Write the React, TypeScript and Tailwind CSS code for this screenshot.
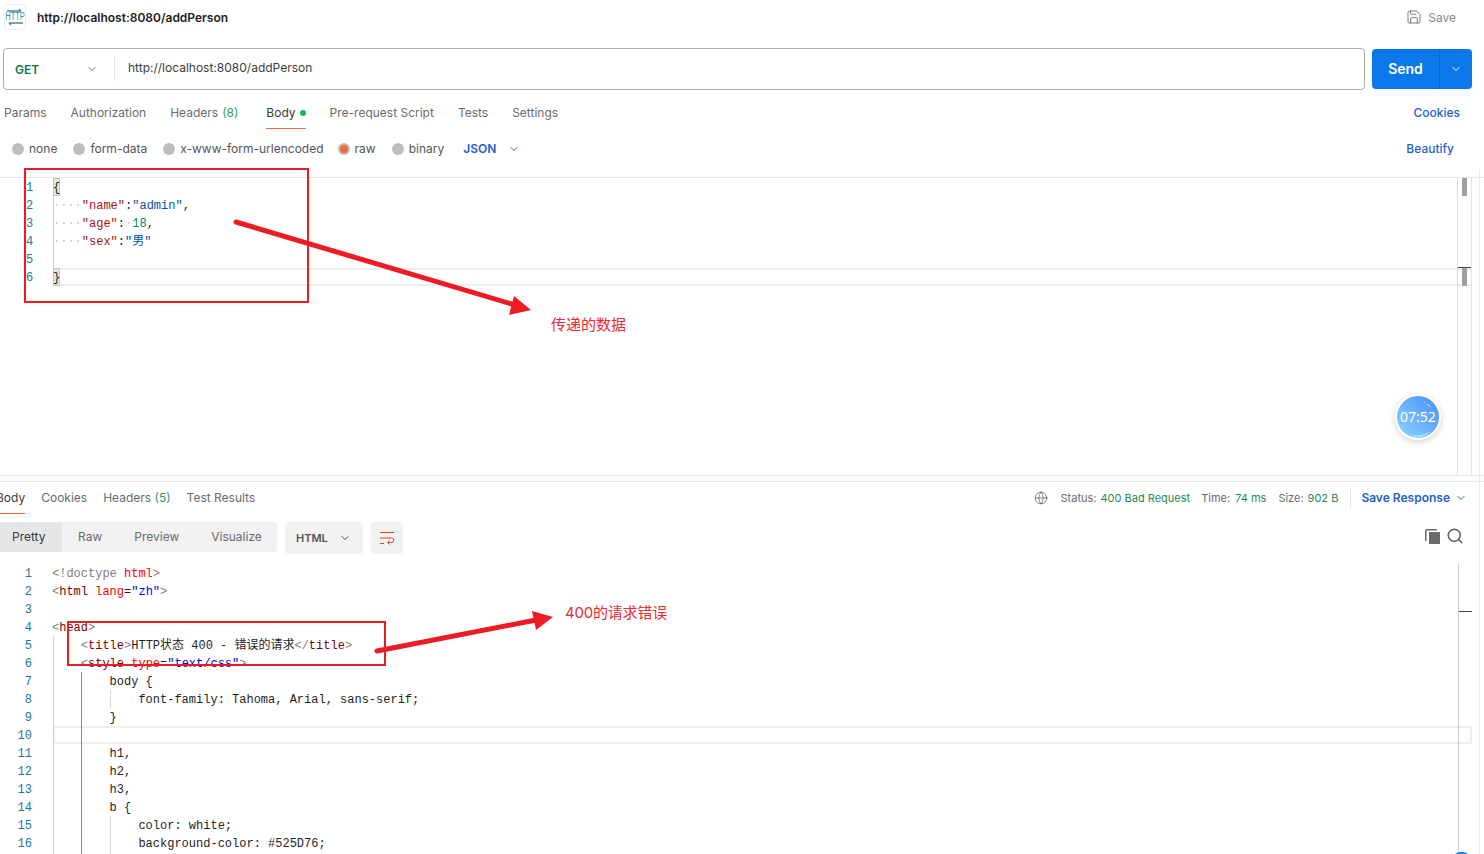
import React from 'react';
import { ChevronDown, Globe, Save, Search } from 'lucide-react';

type Token = [string, string];

const TAG = 'text-[#800000]';
const ATTR = 'text-[#ff0000]';
const VAL = 'text-[#0000ff]';
const PUNCT = 'text-[#808080]';
const INK = 'text-[#1f1f1f]';
const KEY = 'text-[#a31515]';
const STR = 'text-[#0451a5]';
const NUM = 'text-[#098658]';
const DOT = 'text-[#c8c8c8]';

const requestLines: Token[][] = [
  [['{', INK]],
  [['····', DOT], ['"name"', KEY], [':', INK], ['"admin"', STR], [',', INK]],
  [['····', DOT], ['"age"', KEY], [':', INK], ['·', DOT], ['18', NUM], [',', INK]],
  [['····', DOT], ['"sex"', KEY], [':', INK], ['"男"', STR]],
  [],
  [['}', INK]],
];

const responseLines: Token[][] = [
  [['<!doctype', PUNCT], [' ', INK], ['html', ATTR], ['>', PUNCT]],
  [['<', PUNCT], ['html', TAG], [' ', INK], ['lang', ATTR], ['=', INK], ['"zh"', VAL], ['>', PUNCT]],
  [],
  [['<', PUNCT], ['head', TAG], ['>', PUNCT]],
  [['    ', INK], ['<', PUNCT], ['title', TAG], ['>', PUNCT], ['HTTP状态 400 - 错误的请求', INK], ['</', PUNCT], ['title', TAG], ['>', PUNCT]],
  [['    ', INK], ['<', PUNCT], ['style', TAG], [' ', INK], ['type', ATTR], ['=', INK], ['"text/css"', VAL], ['>', PUNCT]],
  [['        body {', INK]],
  [['            font-family: Tahoma, Arial, sans-serif;', INK]],
  [['        }', INK]],
  [],
  [['        h1,', INK]],
  [['        h2,', INK]],
  [['        h3,', INK]],
  [['        b {', INK]],
  [['            color: white;', INK]],
  [['            background-color: #525D76;', INK]],
];

const requestTabs = ['Params', 'Authorization', 'Headers', 'Body', 'Pre-request Script', 'Tests', 'Settings'];

const bodyTypes = [
  { label: 'none', on: false, cls: 'ml-[12px]' },
  { label: 'form-data', on: false, cls: 'ml-[16px]' },
  { label: 'x-www-form-urlencoded', on: false, cls: 'ml-[16px]' },
  { label: 'raw', on: true, cls: 'ml-[14px]' },
  { label: 'binary', on: false, cls: 'ml-[16px]' },
];

const CodeLine = ({ tokens }: { tokens: Token[] }) => (
  <span className="whitespace-pre">
    {tokens.map(([text, color], i) => (
      <span key={i} className={color}>{text}</span>
    ))}
  </span>
);

const App: React.FC = () => {
  return (
    <div className="relative w-[1484px] h-[854px] overflow-hidden bg-white text-xs text-[#6b6b6b] font-['Inter','Noto_Sans_CJK_SC',sans-serif]">
      {/* title bar */}
      <div className="flex items-center justify-between h-[34px] pl-[4px] pr-[28px]">
        <div className="flex items-center">
          <div className="relative flex flex-col items-center justify-center w-[22px] h-[26px] border border-[#eeeeee] rounded-[3px] text-[#3f8c9e]">
            <svg width="16" height="4" viewBox="0 0 16 4" fill="none" stroke="#3f8c9e" strokeWidth="1.4">
              <path d="M0 3h14M12 1l2 2" />
            </svg>
            <span className="text-[10px] leading-[10px] scale-x-75 font-['Liberation_Sans',sans-serif]">HTTP</span>
            <svg width="16" height="4" viewBox="0 0 16 4" fill="none" stroke="#3f8c9e" strokeWidth="1.4">
              <path d="M16 1H2M4 3L2 1" />
            </svg>
          </div>
          <span className="ml-[11px] mt-[1px] font-semibold text-[#212121]">http://localhost:8080/addPerson</span>
        </div>
        <div className="flex items-center gap-[7px] text-[#8a8a8a]">
          <Save size={16} strokeWidth={1.2} className="text-[#5a5a5a]" />
          <span className="mt-[1px] -ml-[0.5px]">Save</span>
        </div>
      </div>

      {/* url bar */}
      <div className="flex mt-[14px] ml-[3px] h-[42px]">
        <div className="flex items-center w-[1362px] border border-[#aaaaaa] rounded-[4px]">
          <span className="ml-[11px] mt-[1px] w-[71px] font-semibold text-[#0f7a43]">GET</span>
          <ChevronDown size={12} className="text-[#6b6b6b]" />
          <div className="ml-[16px] w-px h-[24px] bg-[#e2e2e2]" />
          <span className="ml-[13px] -mt-[2px] text-[#3d3d3d]">http://localhost:8080/addPerson</span>
        </div>
        <div className="flex items-center ml-[7px] mt-[1px] w-[100px] h-[40px] bg-[#0a78e9] rounded-[4px] text-white">
          <span className="w-[67px] text-center text-sm font-semibold">Send</span>
          <div className="w-px h-full bg-[#0867c9]" />
          <ChevronDown size={12} className="ml-[10px]" />
        </div>
      </div>

      {/* request tabs */}
      <div className="flex justify-between h-[39px] pl-[4px] pr-[24px]">
        <div className="flex gap-[24px]">
          {requestTabs.map(tab => (
            <div
              key={tab}
              className={`flex h-full pt-[15px] ${tab === 'Body' ? 'ml-[4px] border-b border-[#f26b3a] text-[#3a3a3a]' : ''}`}
            >
              <span>{tab}</span>
              {tab === 'Headers' && <span className="ml-[4px] text-[#2f9e64]">(8)</span>}
              {tab === 'Body' && <span className="ml-[4px] mt-[5px] w-[6px] h-[6px] rounded-full bg-[#0cbb52]" />}
            </div>
          ))}
        </div>
        <span className="pt-[15px] font-medium text-[#1f5fd0]">Cookies</span>
      </div>

      {/* body type row */}
      <div className="flex justify-between h-[48px] pt-[12px] pr-[30px]">
        <div className="flex items-center h-[16px] text-[#555555]">
          {bodyTypes.map(b => (
            <div key={b.label} className={`flex items-center gap-[5px] ${b.cls}`}>
              <span className="flex items-center justify-center w-[12px] h-[12px] rounded-full bg-[#bdbdbd]">
                {b.on && <span className="w-[8px] h-[8px] rounded-full bg-[#f26b3a]" />}
              </span>
              <span>{b.label}</span>
            </div>
          ))}
          <span className="ml-[19px] font-semibold text-[#1f5fd0]">JSON</span>
          <ChevronDown size={12} className="ml-[12px] text-[#1f5fd0]" />
        </div>
        <span className="h-[16px] font-medium text-[#1f5fd0]">Beautify</span>
      </div>

      {/* request editor */}
      <div className="relative h-[299px] border-y border-[#e8e8e8] font-['Liberation_Mono','Noto_Sans_CJK_SC',monospace]">
        <div className="absolute left-[53px] right-[13px] top-[90px] h-[18px] border-y-2 border-[#eeeeee]" />
        <div className="absolute left-[53px] top-[18px] w-px h-[72px] bg-[#cfcfcf]" />
        <div className="absolute left-[53px] top-0 w-[7px] h-[18px] bg-[#e4e8da] border border-[#c4c4c4]" />
        <div className="absolute left-[53px] top-[90px] w-[7px] h-[18px] bg-[#e4e8da] border border-[#c4c4c4]" />
        {requestLines.map((tokens, i) => (
          <div key={i} className="relative flex h-[18px] leading-[20px]">
            <span className="w-[53px] pl-[26px] text-[#237893]">{i + 1}</span>
            <CodeLine tokens={tokens} />
          </div>
        ))}
        {/* scrollbar */}
        <div className="absolute left-[1457px] top-0 bottom-0 w-px bg-[#dcdcdc]" />
        <div className="absolute left-[1471px] top-0 bottom-0 w-px bg-[#e4e4e4]" />
        <div className="absolute left-[1462px] top-0 w-[5px] h-[18px] bg-[#a0a0a0]" />
        <div className="absolute left-[1458px] top-[89px] w-[13px] h-px bg-[#444444]" />
        <div className="absolute left-[1462px] top-[90px] w-[5px] h-[18px] bg-[#a0a0a0]" />
      </div>

      {/* response header */}
      <div className="flex justify-between h-[33px] mt-[5px] border-t border-[#e8e8e8] pr-[17px]">
        <div className="flex gap-[16px] -ml-[4px]">
          <div className="h-[32px] pt-[8px] border-b border-[#f26b3a] text-[#3a3a3a]">Body</div>
          <div className="pt-[8px]">Cookies</div>
          <div className="pt-[8px]">
            Headers <span className="text-[#2f9e64]">(5)</span>
          </div>
          <div className="pt-[8px]">Test Results</div>
        </div>
        <div className="flex items-start pt-[8px] text-[11px] leading-[16px]">
          <Globe size={14} strokeWidth={1.2} className="mt-[1px] text-[#555555]" />
          <span className="ml-[13px]">Status:</span>
          <span className="ml-[4px] text-[#1f8a55]">400 Bad Request</span>
          <span className="ml-[11px]">Time:</span>
          <span className="ml-[5px] text-[#1f8a55]">74 ms</span>
          <span className="ml-[12px]">Size:</span>
          <span className="ml-[4px] text-[#1f8a55]">902 B</span>
          <div className="ml-[12px] -mt-[1px] w-px h-[19px] bg-[#e4e4e4]" />
          <span className="ml-[10px] text-xs font-semibold text-[#1f5fd0]">Save Response</span>
          <ChevronDown size={12} className="ml-[5px] mt-[2px] text-[#1f5fd0]" />
        </div>
      </div>

      {/* response toolbar */}
      <div className="flex items-start justify-between h-[31px] mt-[8px] pr-[20px]">
        <div className="flex items-start">
          <div className="flex items-center w-[277px] h-[30px] bg-[#f2f2f2] rounded-r-[4px]">
            <span className="flex items-center w-[62px] h-full pl-[12px] bg-[#e6e6e6] text-[#3a3a3a]">Pretty</span>
            <span className="ml-[16px]">Raw</span>
            <span className="ml-[32px]">Preview</span>
            <span className="ml-[32px]">Visualize</span>
          </div>
          <div className="flex items-center ml-[8px] w-[78px] h-[32px] pl-[11px] bg-[#f2f2f2] rounded-[4px] text-[11px] font-semibold text-[#555555]">
            <span className="mt-[1px]">HTML</span>
            <ChevronDown size={12} className="ml-[11px]" />
          </div>
          <div className="flex items-center justify-center ml-[8px] w-[32px] h-[32px] bg-[#f2f2f2] rounded-[4px]">
            <svg width="16" height="14" viewBox="0 0 16 14" fill="none" stroke="#d9481c" strokeWidth="1">
              <path d="M1 1.5h14M1 7h11.5a2.2 2.2 0 0 1 0 4.5H9M10.5 9.5l-2 2 2 2M1 12.5h4" />
            </svg>
          </div>
        </div>
        <div className="flex items-center gap-[6px] h-[28px]">
          <svg width="15" height="15" viewBox="0 0 15 15" fill="#6b6b6b">
            <path d="M4 3h11v12H4z" />
            <path d="M0 1.5A1.5 1.5 0 0 1 1.5 0H12v1.5H1.5V12H0z" />
          </svg>
          <Search size={18} strokeWidth={2} className="text-[#5f5f5f]" />
        </div>
      </div>

      {/* response code */}
      <div className="relative h-[290px] mt-[11px] font-['Liberation_Mono','Noto_Sans_CJK_SC',monospace]">
        <div className="absolute left-[53px] right-[12px] top-[162px] h-[18px] border-2 border-[#eeeeee]" />
        <div className="absolute left-[53px] top-[72px] bottom-0 w-px bg-[#d4d4d4]" />
        <div className="absolute left-[81px] top-[108px] bottom-0 w-px bg-[#8a8a8a]" />
        <div className="absolute left-[110px] top-[126px] w-px h-[18px] bg-[#d4d4d4]" />
        <div className="absolute left-[110px] top-[252px] bottom-0 w-px bg-[#d4d4d4]" />
        {responseLines.map((tokens, i) => (
          <div key={i} className="relative flex h-[18px] leading-[20px]">
            <span className="w-[32px] text-right text-[#237893]">{i + 1}</span>
            <span className="ml-[20px]">
              <CodeLine tokens={tokens} />
            </span>
          </div>
        ))}
        <div className="absolute left-[1458px] top-0 bottom-0 w-px bg-[#d0d0d0]" />
        <div className="absolute left-[1459px] top-[47px] w-[13px] h-px bg-[#444444]" />
      </div>

      {/* page edge */}
      <div className="absolute left-[1479px] top-[170px] bottom-0 w-px bg-[#ececec]" />
      <div className="absolute left-[1451px] top-[852px] w-[21px] h-[10px] rounded-t-full bg-[#0a78e9]" />

      {/* screenshot annotations */}
      <svg className="absolute left-0 top-0" width="1484" height="854" fill="none">
        <rect x="25" y="169" width="283" height="133" stroke="#ed1c24" strokeWidth="2" />
        <path d="M236 222L515 305" stroke="#ed1c24" strokeWidth="5" strokeLinecap="round" />
        <path d="M531 310L514 296L509 315Z" fill="#ed1c24" />
        <rect x="68" y="622" width="317" height="43" stroke="#ed1c24" strokeWidth="2" />
        <path d="M377 651L536 620" stroke="#ed1c24" strokeWidth="5" strokeLinecap="round" />
        <path d="M553 617L532 611L536 630Z" fill="#ed1c24" />
      </svg>
      <span className="absolute left-[551px] top-[315px] text-[15px] leading-[20px] text-[#ed2a30]">传递的数据</span>
      <span className="absolute left-[565px] top-[603px] text-[15px] leading-[20px] tracking-[-0.2px] text-[#ed2a30]">400的请求错误</span>

      {/* floating timer */}
      <div className="absolute left-[1395px] top-[394px] flex items-center justify-center w-[46px] h-[46px] rounded-full bg-gradient-to-tr from-[#8ed6ff] to-[#4a8cf7] border-2 border-white shadow-[0_2px_6px_rgba(0,0,0,0.18)] text-sm text-white font-['Noto_Sans',sans-serif]">
        <svg className="absolute left-0 top-0" width="42" height="42" viewBox="0 0 42 42" fill="none">
          <path d="M27 6.5l1 .4M30 8l4 3.2" stroke="#ffffff" strokeOpacity="0.8" strokeWidth="0.8" />
          <path d="M13 39.5c8 .5 15-1 21-4.5-4 4-9 6.5-14 6.5-2.500 0-5-.7-7-2z" fill="#a8e4ff" />
        </svg>
        <span className="relative">07:52</span>
      </div>
    </div>
  );
};

export default App;
